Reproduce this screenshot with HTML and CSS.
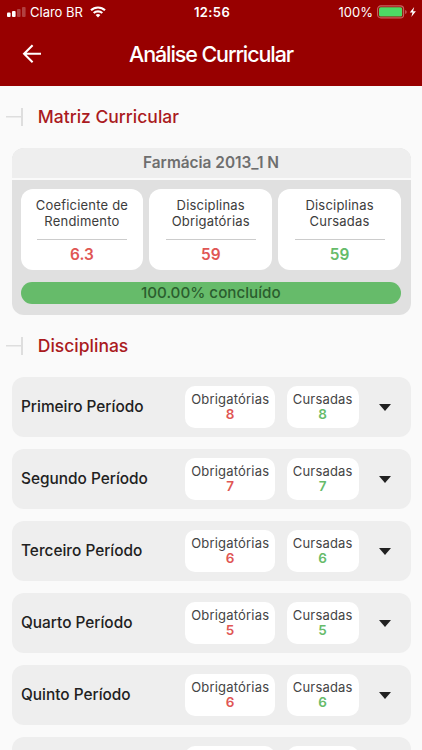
FILE: index.html
```html
<!DOCTYPE html>
<html lang="pt-BR">
<head>
    <meta charset="UTF-8">
    <meta name="viewport" content="width=device-width, initial-scale=1.0">
    <title>Análise Curricular</title>
    <link rel="stylesheet" href="styles.css">
</head>
<body>
    <header class="header">
        <div class="status-bar">
            <div class="status-left">
                <svg class="signal" width="19" height="10" viewBox="0 0 19 10" fill="#fff">
                    <rect x="0" y="3.6" width="3.6" height="4.4" rx="1"/>
                    <rect x="5" y="2" width="3.6" height="6" rx="1"/>
                    <rect x="10" y="0" width="3.6" height="8" rx="1" opacity=".25"/>
                    <rect x="15" y="-2" width="3.6" height="10" rx="1" opacity=".25"/>
                </svg>
                <span class="carrier">Claro BR</span>
                <svg width="16" height="12" viewBox="0 0 16 12" fill="none" stroke="#fff" stroke-width="2.1">
                    <path d="M1 4.3a10 10 0 0 1 14 0"/>
                    <path d="M3.7 7.1a6.2 6.2 0 0 1 8.6 0"/>
                    <path d="M8 11.6L5.6 9.1a3.4 3.4 0 0 1 4.8 0z" fill="#fff" stroke="none"/>
                </svg>
            </div>
            <div class="clock">12:56</div>
            <div class="status-right">
                <span class="percent">100%</span>
                <svg width="40" height="14" viewBox="0 0 40 14">
                    <rect x=".6" y=".9" width="26" height="12" rx="3.2" fill="none" stroke="#c76262" stroke-width="1.1"/>
                    <rect x="2" y="2.3" width="23.2" height="9.2" rx="1.6" fill="#4cd964"/>
                    <path d="M28.2 5v4q1.5-.6 1.5-2t-1.5-2z" fill="#c76262"/>
                    <path d="M37.2 2l-4.4 5.6h2.7L34.3 12l4.6-5.8h-2.8z" fill="#fff"/>
                </svg>
            </div>
        </div>
        <div class="title-bar">
            <svg class="back" width="20" height="20" viewBox="0 0 20 20" fill="none" stroke="#fff" stroke-width="2.1">
                <path d="M19 9.8H2.6M10.6 1.3L2.1 9.8l8.5 8.5"/>
            </svg>
            <h1>Análise Curricular</h1>
        </div>
    </header>

    <main class="content">
        <h2 class="section">Matriz Curricular</h2>

        <div class="panel">
            <div class="panel-title">Farmácia 2013_1 N</div>
            <div class="panel-body">
                <div class="stats">
                    <div class="stat">
                        <p>Coeficiente de<br>Rendimento</p>
                        <strong class="red">6.3</strong>
                    </div>
                    <div class="stat">
                        <p>Disciplinas<br>Obrigatórias</p>
                        <strong class="red">59</strong>
                    </div>
                    <div class="stat">
                        <p>Disciplinas<br>Cursadas</p>
                        <strong class="green">59</strong>
                    </div>
                </div>
                <div class="progress">100.00% concluído</div>
            </div>
        </div>

        <h2 class="section">Disciplinas</h2>

        <div class="periods">
            <div class="period">
                <span class="name">Primeiro Período</span>
                <div class="chip required">Obrigatórias<strong class="red">8</strong></div>
                <div class="chip done">Cursadas<strong class="green">8</strong></div>
                <span class="arrow"></span>
            </div>
            <div class="period">
                <span class="name">Segundo Período</span>
                <div class="chip required">Obrigatórias<strong class="red">7</strong></div>
                <div class="chip done">Cursadas<strong class="green">7</strong></div>
                <span class="arrow"></span>
            </div>
            <div class="period">
                <span class="name">Terceiro Período</span>
                <div class="chip required">Obrigatórias<strong class="red">6</strong></div>
                <div class="chip done">Cursadas<strong class="green">6</strong></div>
                <span class="arrow"></span>
            </div>
            <div class="period">
                <span class="name">Quarto Período</span>
                <div class="chip required">Obrigatórias<strong class="red">5</strong></div>
                <div class="chip done">Cursadas<strong class="green">5</strong></div>
                <span class="arrow"></span>
            </div>
            <div class="period">
                <span class="name">Quinto Período</span>
                <div class="chip required">Obrigatórias<strong class="red">6</strong></div>
                <div class="chip done">Cursadas<strong class="green">6</strong></div>
                <span class="arrow"></span>
            </div>
            <div class="period cut">
                <span class="name"></span>
                <div class="chip required"></div>
                <div class="chip done"></div>
                <span class="arrow-space"></span>
            </div>
        </div>
    </main>
</body>
</html>
```

FILE: styles.css
```css
* {
    box-sizing: border-box;
}
body {
    margin: 0;
    height: 750px;
    overflow: hidden;
    font-family: Inter, "Liberation Sans", sans-serif;
    background-color: #fafafa;
    color: #212121;
}
h1, h2, p {
    margin: 0;
}
.header {
    height: 85.5px;
    background-color: #980000;
    color: #fff;
}
.status-bar {
    display: grid;
    grid-template-columns: 1fr auto 1fr;
    align-items: center;
    height: 24px;
    padding: 0 5px 0 7px;
    font-size: 13px;
}
.status-left, .status-right {
    display: flex;
    align-items: center;
}
.status-right {
    justify-content: flex-end;
}
.signal {
    margin-top: 4px;
    overflow: visible;
}
.carrier {
    margin: 0 7px 0 4px;
}
.clock {
    font-weight: 600;
    letter-spacing: 0.4px;
}
.percent {
    margin-right: 4px;
}
.title-bar {
    display: grid;
    grid-template-columns: 60px 1fr 60px;
    align-items: center;
    height: 60px;
}
.back {
    margin-left: 22px;
}
h1 {
    text-align: center;
    font-size: 21.5px;
    font-weight: 500;
    letter-spacing: -1.1px;
}
.content {
    padding: 0 11.5px;
}
.section {
    display: flex;
    align-items: center;
    padding-top: 20px;
    font-size: 17.5px;
    font-weight: 500;
    line-height: 22px;
    color: #aa1a1e;
}
/* small connector in front of the section title */
.section::before {
    content: "";
    width: 15px;
    height: 18px;
    margin: 0 14.8px 0 -5.5px;
    border-right: 2px solid #dedede;
    background: linear-gradient(#dedede, #dedede) center / 100% 1.5px no-repeat;
}
.panel {
    margin-top: 20.5px;
    height: 167px;
    border-radius: 12px;
    overflow: hidden;
    background-color: #e0e0e0;
}
.panel-title {
    height: 32px;
    border-bottom: 2px solid #fafafa;
    background-color: #eee;
    color: #6e6e6e;
    font-size: 15.4px;
    font-weight: 600;
    line-height: 29px;
    text-align: center;
}
.panel-body {
    padding: 9px 9.5px 0 9px;
}
.stats {
    display: grid;
    grid-template-columns: repeat(3, 1fr);
    gap: 6px;
}
.stat {
    display: flex;
    flex-direction: column;
    align-items: center;
    height: 81px;
    padding-top: 9px;
    border-radius: 12px;
    background-color: #fff;
    font-size: 13px;
    line-height: 15.5px;
    letter-spacing: 0.2px;
    text-align: center;
    color: #3c3c3c;
}
.stat p {
    width: 90px;
    height: 42px;
    border-bottom: 1.5px solid #ccc;
    white-space: nowrap;
    display: flex;
    justify-content: center;
}
.stat strong {
    margin-top: 7px;
    font-size: 15.4px;
    font-weight: 600;
    line-height: 16px;
    letter-spacing: 0;
}
.red {
    color: #e05654;
}
.green {
    color: #66bb6a;
}
.progress {
    margin-top: 11.5px;
    height: 22.5px;
    border-radius: 12px;
    background-color: #66bb6a;
    color: #2b5e2e;
    font-size: 15.2px;
    font-weight: 500;
    line-height: 22px;
    text-align: center;
}
.periods {
    display: flex;
    flex-direction: column;
    gap: 12px;
    margin-top: 20px;
}
.period {
    display: flex;
    align-items: center;
    height: 60px;
    padding: 0 20px 0 9.5px;
    border-radius: 12px;
    background-color: #eee;
}
.name {
    flex: 1;
    margin-bottom: 1px;
    font-size: 15.4px;
    font-weight: 500;
}
.chip {
    height: 42px;
    padding-top: 5px;
    border-radius: 10px;
    background-color: #fff;
    font-size: 13px;
    line-height: 16px;
    letter-spacing: 0.2px;
    text-align: center;
    color: #444;
}
.chip strong {
    display: block;
    font-size: 13.5px;
    font-weight: 600;
    line-height: 15px;
}
.required {
    width: 90px;
    margin-right: 11.5px;
}
.done {
    width: 72px;
    margin-right: 19.8px;
}
.arrow {
    border: 6.5px solid transparent;
    border-top: 7px solid #212121;
    border-bottom: 0;
}
/* the last row is cut by the bottom of the screen */
.cut {
    align-items: flex-start;
    height: 13px;
    padding-top: 9px;
    border-radius: 12px 12px 0 0;
    overflow: hidden;
}
.arrow-space {
    width: 12px;
}
```
